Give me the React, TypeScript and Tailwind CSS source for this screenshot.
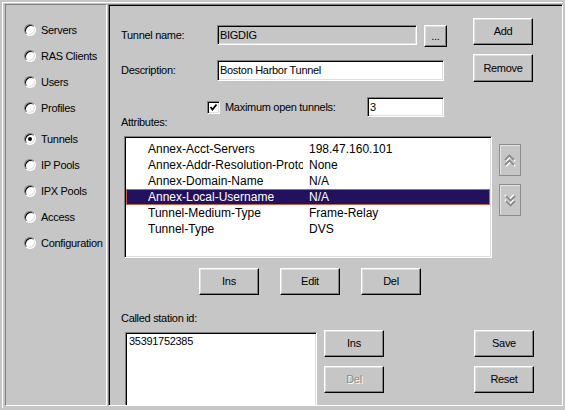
import React from 'react';

// Win95-style borders
const sunken =
  'border border-t-[#808080] border-l-[#808080] border-r-white border-b-white shadow-[inset_1px_1px_0_#000,inset_-1px_-1px_0_#dfdfdf]';
const raised =
  'border border-t-white border-l-white border-r-black border-b-black shadow-[inset_-1px_-1px_0_#808080,inset_1px_1px_0_#dfdfdf]';

const Btn: React.FC<{ className?: string; disabled?: boolean; children: React.ReactNode }> = ({
  className = '',
  disabled = false,
  children,
}) => (
  <div
    className={`flex items-center justify-center bg-[#c6c6c6] ${raised} ${
      disabled ? 'text-[#8a8a8a] [text-shadow:1px_1px_0_#fff]' : 'text-black'
    } ${className}`}
  >
    {children}
  </div>
);

const Radio: React.FC<{ label: string; checked?: boolean }> = ({ label, checked }) => (
  <div className="flex items-center h-[26px]">
    <span
      className={`ml-[18px] w-[12px] h-[12px] rounded-full bg-white flex items-center justify-center ${sunken}`}
    >
      {checked && <span className="w-[4px] h-[4px] rounded-full bg-black" />}
    </span>
    <span className="ml-[5px]">{label}</span>
  </div>
);

const Chevrons: React.FC<{ down?: boolean }> = ({ down }) => (
  <svg width="12" height="13" viewBox="0 0 12 13" className={down ? 'rotate-180' : ''}>
    <g fill="none" strokeWidth="1.8">
      <polyline points="2,7 6.5,2.5 11,7" stroke="#fff" />
      <polyline points="2,12 6.5,7.5 11,12" stroke="#fff" />
      <polyline points="1,6 5.5,1.5 10,6" stroke="#8a8a8a" />
      <polyline points="1,11 5.5,6.5 10,11" stroke="#8a8a8a" />
    </g>
  </svg>
);

const attrs = [
  ['Annex-Acct-Servers', '198.47.160.101'],
  ['Annex-Addr-Resolution-Protocol', 'None'],
  ['Annex-Domain-Name', 'N/A'],
  ['Annex-Local-Username', 'N/A'],
  ['Tunnel-Medium-Type', 'Frame-Relay'],
  ['Tunnel-Type', 'DVS'],
];

const sections = ['Servers', 'RAS Clients', 'Users', 'Profiles'];
const sections2 = ['Tunnels', 'IP Pools', 'IPX Pools', 'Access', 'Configuration'];

export default function App() {
  return (
    <div className="w-[565px] h-[410px] bg-[#c6c6c6] p-[2px] overflow-hidden font-['Liberation_Sans',Arial,sans-serif] text-[11px] tracking-[-0.3px] text-black">
      <div className="h-full border-t border-l border-white pl-[2px] pt-[1px] pb-[2px] flex">
        {/* left navigation */}
        <div className="w-[102px] h-full border border-t-[#808080] border-l-[#808080] border-r-white border-b-white pt-[12px]">
          {sections.map((s) => (
            <Radio key={s} label={s} />
          ))}
          <div className="mt-[5px]">
            {sections2.map((s) => (
              <Radio key={s} label={s} checked={s === 'Tunnels'} />
            ))}
          </div>
        </div>

        {/* tunnel form */}
        <div className="ml-[1px] flex-1 h-full border border-t-[#808080] border-l-[#808080] border-r-white border-b-white shadow-[inset_1px_1px_0_#000] overflow-hidden flex flex-col">
          <div className="flex items-start mt-[13px]">
            <span className="ml-[12px] w-[96px] mt-[7px] leading-[20px]">Tunnel name:</span>
            <div className={`${sunken} w-[200px] h-[20px] mt-[7px] pl-[2px] leading-[18px] bg-[#c6c6c6]`}>
              BIGDIG
            </div>
            <Btn className="ml-[7px] mt-[7px] w-[23px] h-[22px]">...</Btn>
            <Btn className="ml-[26px] w-[60px] h-[27px]">Add</Btn>
          </div>

          <div className="flex items-start mt-[7px]">
            <span className="ml-[12px] w-[96px] mt-[6px] leading-[21px]">Description:</span>
            <div className={`${sunken} bg-white w-[227px] h-[21px] mt-[6px] pl-[2px] leading-[19px]`}>
              Boston Harbor Tunnel
            </div>
            <Btn className="ml-[29px] w-[60px] h-[28px]">Remove</Btn>
          </div>

          <div className="flex items-start mt-[15px]">
            <span className={`ml-[98px] mt-[4px] w-[13px] h-[13px] bg-white flex items-center justify-center ${sunken}`}>
              <svg width="9" height="9" viewBox="0 0 9 9">
                <polyline points="1.5,4 3.5,6.5 7.5,1.5" fill="none" stroke="#000" strokeWidth="1.8" />
              </svg>
            </span>
            <span className="ml-[5px] w-[142px] leading-[20px]">Maximum open tunnels:</span>
            <div className={`${sunken} bg-white w-[77px] h-[20px] pl-[2px] leading-[18px]`}>3</div>
          </div>

          <div className="ml-[12px] leading-[10px]">Attributes:</div>

          <div className="flex items-start mt-[9px]">
            <div className={`ml-[15px] w-[368px] h-[122px] bg-white pt-[4px] text-[12px] tracking-normal ${sunken}`}>
              {attrs.map(([name, value], i) => (
                <div
                  key={name}
                  className={`mx-[1px] h-[16px] flex items-center border ${
                    i === 3 ? 'bg-[#22125e] text-white border-[#c8604e]' : 'border-transparent'
                  }`}
                >
                  <span className="ml-[21px] w-[155px] overflow-hidden whitespace-nowrap">{name}</span>
                  <span className="ml-[6px] whitespace-nowrap">{value}</span>
                </div>
              ))}
            </div>
            <div className="ml-[7px] flex flex-col">
              <div className="mt-[8px] w-[22px] h-[32px] border border-[#8c8c8c] shadow-[inset_1px_1px_0_#e4e4e4] flex items-center justify-center">
                <Chevrons />
              </div>
              <div className="mt-[8px] w-[22px] h-[32px] border border-[#8c8c8c] shadow-[inset_1px_1px_0_#e4e4e4] flex items-center justify-center">
                <Chevrons down />
              </div>
            </div>
          </div>

          <div className="flex items-start mt-[10px] ml-[90px] gap-[21px]">
            <Btn className="w-[60px] h-[27px]">Ins</Btn>
            <Btn className="w-[60px] h-[27px]">Edit</Btn>
            <Btn className="w-[60px] h-[27px]">Del</Btn>
          </div>

          <div className="ml-[12px] mt-[16px] leading-[14px]">Called station id:</div>

          <div className="flex items-start mt-[5px]">
            <div className={`ml-[16px] mt-[2px] w-[192px] h-[80px] bg-white pl-[3px] pt-[1px] leading-[14px] ${sunken}`}>
              35391752385
            </div>
            <div className="ml-[7px] flex flex-col gap-[9px]">
              <Btn className="w-[60px] h-[27px]">Ins</Btn>
              <Btn className="w-[60px] h-[27px]" disabled>
                Del
              </Btn>
            </div>
            <div className="ml-[90px] flex flex-col gap-[9px]">
              <Btn className="w-[60px] h-[27px]">Save</Btn>
              <Btn className="w-[60px] h-[27px]">Reset</Btn>
            </div>
          </div>
        </div>
      </div>
    </div>
  );
}
